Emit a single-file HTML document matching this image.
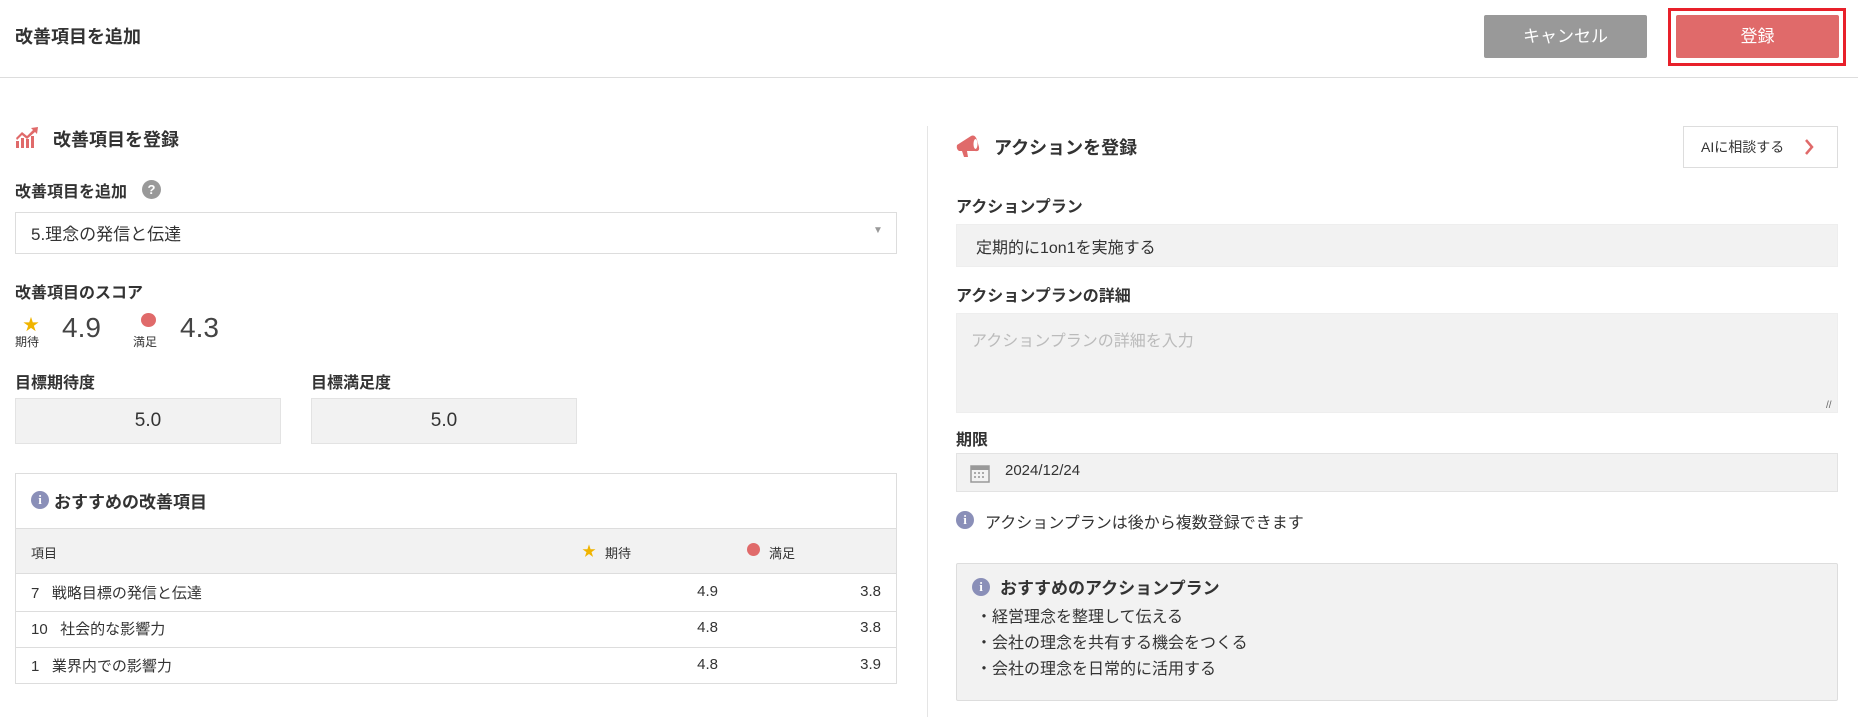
<!DOCTYPE html>
<html><head><meta charset="utf-8"><style>
*{box-sizing:border-box;margin:0;padding:0}
body{width:1858px;height:717px;background:#fff;font-family:"Liberation Sans","Noto Sans CJK JP",sans-serif;color:#333;position:relative;overflow:hidden}
.a{position:absolute;white-space:nowrap}
.b{font-weight:bold}
.box{position:absolute;background:#f2f2f2;border:1px solid #e3e3e3}
.info{display:inline-block;width:18px;height:18px;border-radius:50%;background:#8a8fb8;color:#fff;font:bold 13px "Liberation Serif",serif;text-align:center;line-height:18px}
</style></head><body>
<div class="a b" style="left:15px;top:23px;font-size:18px">改善項目を追加</div>
<div class="a" style="left:1484px;top:15px;width:163px;height:43px;background:#999;color:#fff;font-size:17px;text-align:center;line-height:43px;border-radius:2px">キャンセル</div>
<div class="a" style="left:1668px;top:8px;width:178px;height:58px;border:3px solid #e8202a"></div>
<div class="a" style="left:1676px;top:15px;width:163px;height:43px;background:#e06a6a;color:#fff;font-size:17px;text-align:center;line-height:43px;border-radius:2px">登録</div>
<div class="a" style="left:0;top:77px;width:1858px;height:1px;background:#ddd"></div>
<div class="a" style="left:927px;top:126px;width:1px;height:591px;background:#e5e5e5"></div>

<svg class="a" style="left:15px;top:127px" width="24" height="21" viewBox="0 0 24 21"><g fill="#e06a6a"><rect x="1" y="14" width="3" height="7"/><rect x="6" y="11" width="3" height="10"/><rect x="11" y="12" width="3" height="9"/><rect x="16" y="9" width="3" height="12"/><path d="M1 11 L7 5 L12 9 L18 3 L16 1 L23 0 L22 7 L20 5 L12 12 L7 8 L2 13Z"/></g></svg>
<div class="a b" style="left:53px;top:126px;font-size:18px">改善項目を登録</div>
<div class="a b" style="left:15px;top:178px;font-size:16px">改善項目を追加</div>
<div class="a" style="left:142px;top:180px;width:19px;height:19px;border-radius:50%;background:#999;color:#fff;font-size:13px;font-weight:bold;text-align:center;line-height:19px">?</div>
<div class="a" style="left:15px;top:212px;width:882px;height:42px;border:1px solid #ddd;background:#fff"></div>
<div class="a" style="left:31px;top:220px;font-size:17px">5.理念の発信と伝達</div>
<div class="a" style="left:873px;top:225px;font-size:10px;color:#999">▼</div>
<div class="a b" style="left:15px;top:279px;font-size:16px">改善項目のスコア</div>
<div class="a" style="left:23px;top:311px;font-size:16px;color:#f0b400">★</div>
<div class="a" style="left:15px;top:333px;font-size:12px">期待</div>
<div class="a" style="left:62px;top:312px;font-size:28px;color:#444">4.9</div>
<div class="a" style="left:141px;top:313px;width:15px;height:14px;border-radius:50%;background:#e06a6a"></div>
<div class="a" style="left:133px;top:333px;font-size:12px">満足</div>
<div class="a" style="left:180px;top:312px;font-size:28px;color:#444">4.3</div>

<div class="a b" style="left:15px;top:374px;font-size:16px;line-height:1.2">目標期待度</div>
<div class="a b" style="left:311px;top:374px;font-size:16px;line-height:1.2">目標満足度</div>
<div class="box" style="left:15px;top:398px;width:266px;height:46px;font-size:19px;text-align:center;line-height:44px">5.0</div>
<div class="box" style="left:311px;top:398px;width:266px;height:46px;font-size:19px;text-align:center;line-height:44px">5.0</div>

<div class="a" style="left:15px;top:473px;width:882px;height:211px;border:1px solid #ddd"></div>
<div class="a" style="left:31px;top:491px"><span class="info">i</span></div>
<div class="a b" style="left:54px;top:488px;font-size:17px">おすすめの改善項目</div>
<div class="a" style="left:16px;top:528px;width:880px;height:46px;background:#f2f2f2;border-top:1px solid #ddd;border-bottom:1px solid #ddd"></div>
<div class="a" style="left:31px;top:543px;font-size:13px">項目</div>
<div class="a" style="left:582px;top:541px;font-size:14px;color:#f0b400">★</div>
<div class="a" style="left:605px;top:543px;font-size:13px">期待</div>
<div class="a" style="left:747px;top:543px;width:13px;height:13px;border-radius:50%;background:#e06a6a"></div>
<div class="a" style="left:769px;top:543px;font-size:13px">満足</div>
<div class="a" style="left:16px;top:611px;width:880px;height:1px;background:#ddd"></div>
<div class="a" style="left:16px;top:647px;width:880px;height:1px;background:#ddd"></div>
<div class="a" style="left:31px;top:582px;font-size:15px">7&nbsp;&nbsp; 戦略目標の発信と伝達</div>
<div class="a" style="left:31px;top:618px;font-size:15px">10&nbsp;&nbsp; 社会的な影響力</div>
<div class="a" style="left:31px;top:655px;font-size:15px">1&nbsp;&nbsp; 業界内での影響力</div>
<div class="a" style="left:680px;top:583px;width:38px;text-align:right;font-size:15px">4.9</div>
<div class="a" style="left:680px;top:619px;width:38px;text-align:right;font-size:15px">4.8</div>
<div class="a" style="left:680px;top:656px;width:38px;text-align:right;font-size:15px">4.8</div>
<div class="a" style="left:843px;top:583px;width:38px;text-align:right;font-size:15px">3.8</div>
<div class="a" style="left:843px;top:619px;width:38px;text-align:right;font-size:15px">3.8</div>
<div class="a" style="left:843px;top:656px;width:38px;text-align:right;font-size:15px">3.9</div>

<svg class="a" style="left:956px;top:133px" width="24" height="25" viewBox="0 0 24 25"><path fill="#e06a6a" d="M1 12 L15 3 Q19 1 21 7 L23 14 Q24 19 19 18 L11 18 L12 24 L8 24 L6 18 L3 18 Q0 16 1 12Z"/><ellipse cx="19.5" cy="11" rx="2" ry="5" fill="#fff"/></svg>
<div class="a b" style="left:994px;top:134px;font-size:18px">アクションを登録</div>
<div class="a" style="left:1683px;top:126px;width:155px;height:42px;border:1px solid #ddd;background:#fff"></div>
<div class="a" style="left:1701px;top:137px;font-size:14px">AIに相談する</div>
<svg class="a" style="left:1804px;top:138px" width="10" height="18" viewBox="0 0 10 18"><path d="M2 2 L8 9 L2 16" fill="none" stroke="#e06a6a" stroke-width="2.5"/></svg>

<div class="a b" style="left:956px;top:193px;font-size:16px">アクションプラン</div>
<div class="box" style="left:956px;top:224px;width:882px;height:43px;border-color:#eee"></div>
<div class="a" style="left:976px;top:234px;font-size:16px">定期的に1on1を実施する</div>
<div class="a b" style="left:956px;top:282px;font-size:16px">アクションプランの詳細</div>
<div class="box" style="left:956px;top:313px;width:882px;height:100px;border-color:#eee"></div>
<div class="a" style="left:971px;top:327px;font-size:16px;color:#bbb">アクションプランの詳細を入力</div>
<div class="a" style="left:1826px;top:400px;font-size:10px;color:#666">//</div>
<div class="a b" style="left:956px;top:431px;font-size:16px;line-height:1.2">期限</div>
<div class="box" style="left:956px;top:453px;width:882px;height:39px"></div>
<svg class="a" style="left:970px;top:463px" width="20" height="20" viewBox="0 0 20 20"><rect x="1" y="3" width="18" height="16" fill="none" stroke="#999" stroke-width="1.5"/><rect x="1" y="3" width="18" height="4" fill="#999"/><g fill="#aaa"><rect x="4" y="9" width="2" height="2"/><rect x="8" y="9" width="2" height="2"/><rect x="12" y="9" width="2" height="2"/><rect x="4" y="13" width="2" height="2"/><rect x="8" y="13" width="2" height="2"/><rect x="12" y="13" width="2" height="2"/></g></svg>
<div class="a" style="left:1005px;top:462px;font-size:15px">2024/12/24</div>
<div class="a" style="left:956px;top:511px"><span class="info">i</span></div>
<div class="a" style="left:985px;top:509px;font-size:16px">アクションプランは後から複数登録できます</div>

<div class="box" style="left:956px;top:563px;width:882px;height:138px;border-color:#ddd;border-radius:2px"></div>
<div class="a" style="left:972px;top:578px"><span class="info">i</span></div>
<div class="a b" style="left:1000px;top:574px;font-size:17px">おすすめのアクションプラン</div>
<div class="a" style="left:976px;top:603px;font-size:16px">・経営理念を整理して伝える</div>
<div class="a" style="left:976px;top:629px;font-size:16px">・会社の理念を共有する機会をつくる</div>
<div class="a" style="left:976px;top:655px;font-size:16px">・会社の理念を日常的に活用する</div>
</body></html>
